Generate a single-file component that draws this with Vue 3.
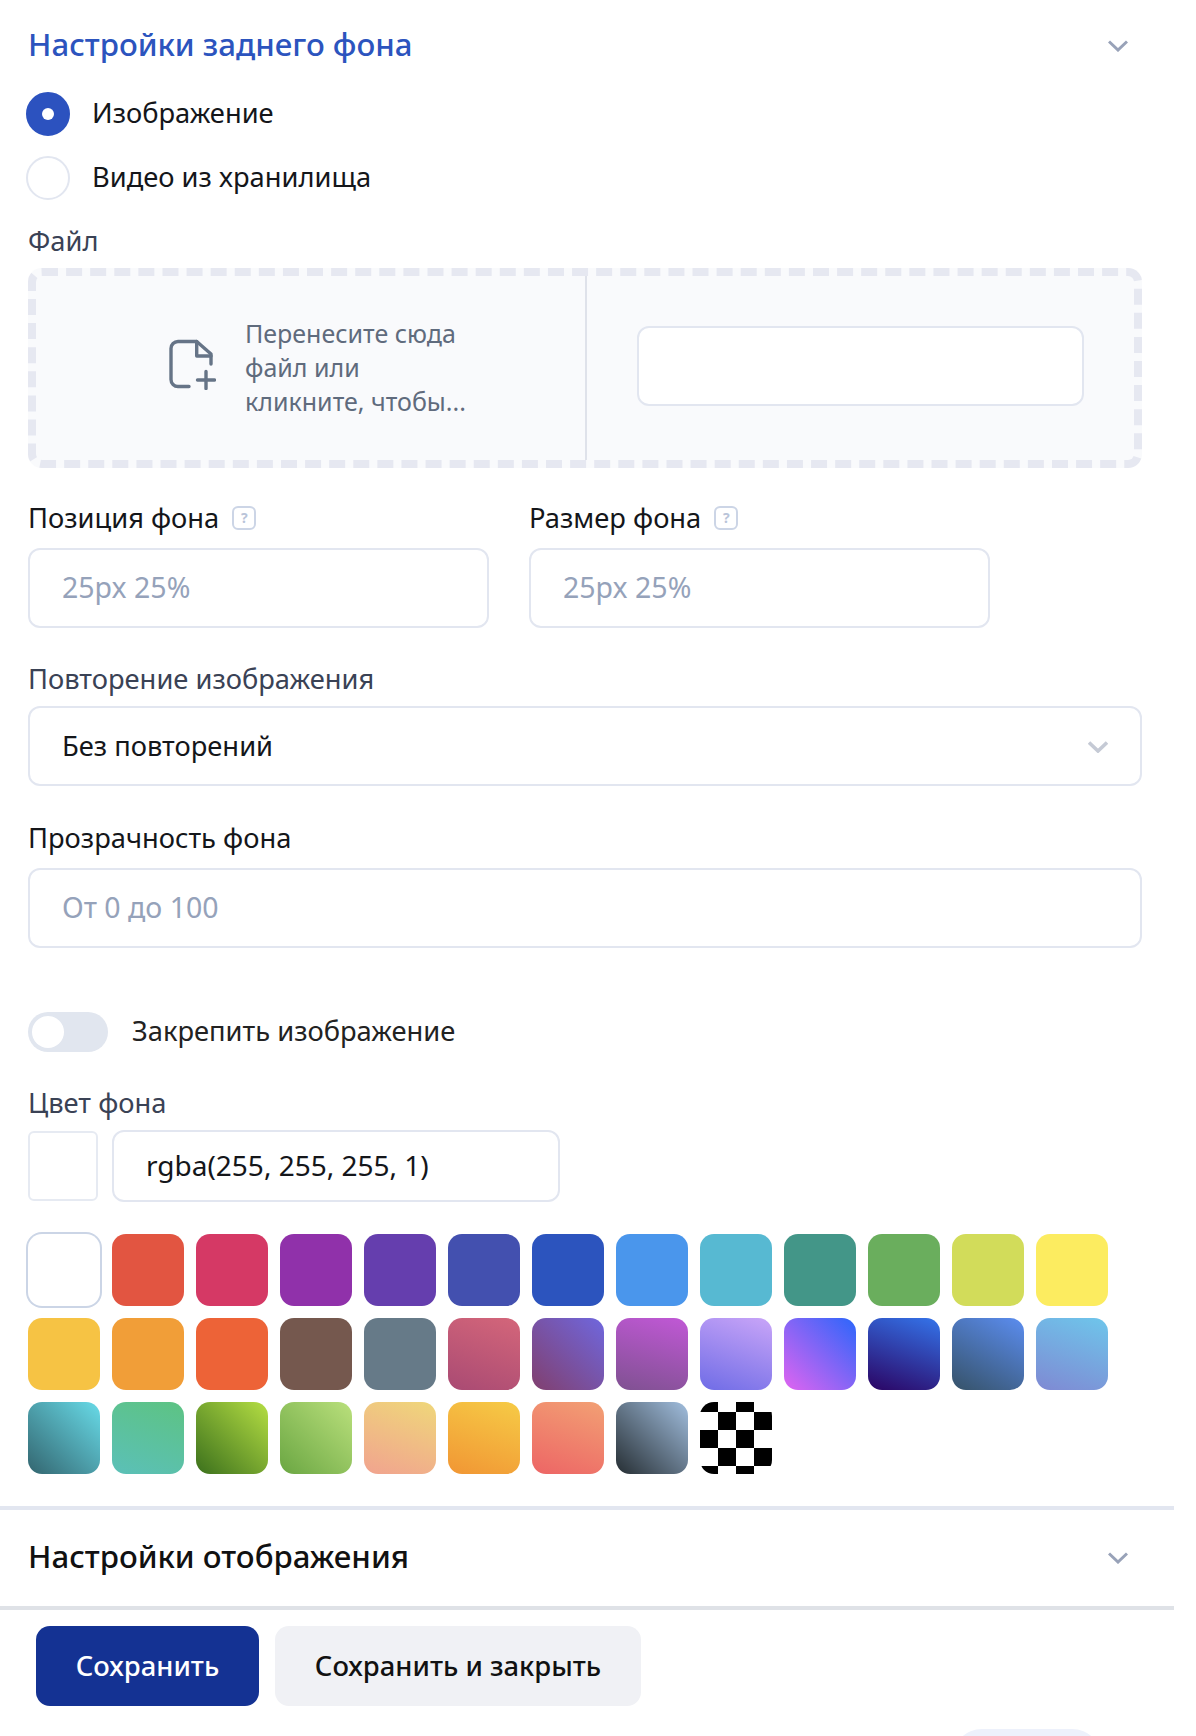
<template>
  <div class="page">
    <section class="panel">
      <header class="section-head">
        <h2 class="title title-active">Настройки заднего фона</h2>
        <svg class="chevron" width="20" height="12" viewBox="0 0 20 12"><polyline points="1,1.5 10,10 19,1.5" /></svg>
      </header>

      <div class="radios">
        <label class="radio-row">
          <span class="radio radio-on"><span class="radio-dot"></span></span>
          <span class="row-text">Изображение</span>
        </label>
        <label class="radio-row">
          <span class="radio"></span>
          <span class="row-text">Видео из хранилища</span>
        </label>
      </div>

      <div class="label label-muted file-label">Файл</div>
      <div class="dropzone">
        <div class="drop-left">
          <svg class="file-icon" width="48" height="52" viewBox="0 0 48 52">
            <path d="M21 48.5H10a7 7 0 0 1-7-7V10.5a7 7 0 0 1 7-7H28.7L43 16V26" />
            <path d="M28.7 3.5V18H43" />
            <path d="M38 33.5V50.5M29.5 42H46.5" />
          </svg>
          <div class="drop-text">Перенесите сюда<br>файл или<br>кликните, чтобы...</div>
        </div>
        <div class="drop-right">
          <div class="field"></div>
        </div>
      </div>

      <div class="pair">
        <div class="pair-col">
          <div class="label">Позиция фона<span class="help">?</span></div>
          <div class="field placeholder">25px 25%</div>
        </div>
        <div class="pair-col">
          <div class="label">Размер фона<span class="help">?</span></div>
          <div class="field placeholder">25px 25%</div>
        </div>
      </div>

      <div class="label label-muted repeat-label">Повторение изображения</div>
      <div class="field select">
        <span>Без повторений</span>
        <svg class="chevron chevron-light" width="20" height="12" viewBox="0 0 20 12"><polyline points="1,1.5 10,10 19,1.5" /></svg>
      </div>

      <div class="label opacity-label">Прозрачность фона</div>
      <div class="field placeholder">От 0 до 100</div>

      <div class="toggle-row">
        <span class="toggle"><span class="knob"></span></span>
        <span class="row-text">Закрепить изображение</span>
      </div>

      <div class="label label-muted color-label">Цвет фона</div>
      <div class="color-row">
        <div class="color-preview"></div>
        <div class="color-input">rgba(255, 255, 255, 1)</div>
      </div>

      <div class="swatches">
        <div
          v-for="(bg, i) in swatches"
          :key="i"
          class="swatch"
          :class="{ selected: i === 0 }"
          :style="{ background: bg }"
        ></div>
        <div class="swatch checker"></div>
      </div>
    </section>

    <div class="rule"></div>
    <section class="panel">
      <header class="section-head second">
        <h2 class="title">Настройки отображения</h2>
        <svg class="chevron" width="20" height="12" viewBox="0 0 20 12"><polyline points="1,1.5 10,10 19,1.5" /></svg>
      </header>
    </section>
    <div class="rule rule-grey"></div>

    <footer class="actions">
      <button class="btn btn-primary">Сохранить</button>
      <button class="btn btn-light">Сохранить и закрыть</button>
    </footer>
    <div class="floating"></div>
  </div>
</template>

<script setup>
// пары цветов для градиентных образцов
const grad = (from, to, angle = 45) => `linear-gradient(${angle}deg, ${from}, ${to})`

const swatches = [
  '#ffffff', '#e25541', '#d53965', '#9031aa', '#653eae', '#4350af', '#2c54be',
  '#4a96ec', '#57b9d2', '#439688', '#6aae5d', '#d2dc5a', '#fcec60',
  '#f6c344', '#f19e38', '#ed6337', '#75584e', '#667a88',
  grad('#a94a73', '#d4667a', 20),
  grad('#813f6e', '#6f67de'),
  grad('#7f5191', '#c158d6', 15),
  grad('#6f6ce6', '#c9a5f8', 20),
  grad('#e064f0', '#2b66fb'),
  grad('#2b0463', '#3474ea', 20),
  grad('#365268', '#5b8df0', 30),
  grad('#7f89d3', '#6ec6eb', 20),
  grad('#33656f', '#68dbe8'),
  grad('#5bc0b8', '#5dc383', 20),
  grad('#3b701c', '#b5de43'),
  grad('#6aa642', '#bae07c'),
  grad('#f1a38f', '#efd77a', 20),
  grad('#f19634', '#f6cb46', 20),
  grad('#ed6565', '#f2a074', 20),
  grad('#262e33', '#a1bede')
]
</script>

<style>
html, body {
  background: #fff;
  overflow: hidden;
}
</style>

<style scoped>
.page {
  width: 1196px;
  height: 1736px;
  overflow: hidden;
  font-family: "Noto Sans", "Open Sans", sans-serif;
  font-size: 27.3px;
  color: #14161a;
  background: #fff;
}

.panel {
  width: 1174px;
  box-sizing: border-box;
  padding: 0 32px 0 28px;
}

.section-head {
  height: 92px;
  display: flex;
  align-items: center;
  justify-content: space-between;
}

.section-head.second {
  height: 96px;
}

.title {
  margin: 0 0 4px;
  font-size: 31.2px;
  font-weight: 500;
  color: #111;
}

.title-active {
  color: #2c54be;
}

.chevron {
  margin-right: 14px;
  fill: none;
  stroke: #98a2b8;
  stroke-width: 3;
}

.chevron-light {
  margin: 4px 0 0;
  stroke: #c5cad5;
  stroke-width: 3.6;
}

.radios {
  display: flex;
  flex-direction: column;
  gap: 20px;
  margin-left: -2px;
}

.radio-row {
  display: flex;
  align-items: center;
  gap: 22px;
  height: 44px;
}

.row-text {
  margin-bottom: 3px;
}

.radio {
  width: 44px;
  height: 44px;
  box-sizing: border-box;
  border: 2px solid #e2e6f0;
  border-radius: 50%;
  display: flex;
  align-items: center;
  justify-content: center;
}

.radio-on {
  background: #2c52bf;
  border-color: #2c52bf;
}

.radio-dot {
  width: 12px;
  height: 12px;
  border-radius: 50%;
  background: #fff;
}

.label {
  display: flex;
  align-items: center;
  gap: 13px;
  height: 36px;
  box-sizing: border-box;
  padding-bottom: 2px;
}

.label-muted {
  color: #3a4255;
}

.file-label {
  margin: 23px 0 9px;
}

.repeat-label {
  margin: 33px 0 9px;
}

.opacity-label {
  margin: 34px 0 12px;
}

.color-label {
  margin: 33px 0 9px;
}

.dropzone {
  height: 200px;
  box-sizing: border-box;
  border: 8px dashed #e6e8f1;
  border-radius: 14px;
  background: #f9fafc;
  display: flex;
}

.drop-left {
  width: 551px;
  box-sizing: border-box;
  padding-left: 132px;
  border-right: 2px solid #dfe2ea;
  display: flex;
  align-items: center;
  gap: 29px;
  flex-shrink: 0;
}

.file-icon {
  fill: none;
  stroke: #667487;
  stroke-width: 3.4;
  stroke-linecap: round;
  stroke-linejoin: round;
  margin-top: -8px;
}

.drop-text {
  font-size: 25px;
  line-height: 34px;
  color: #5f6b7d;
  white-space: nowrap;
  margin-bottom: 3px;
}

.drop-right {
  flex: 1;
  padding: 0 50px 4px;
  display: flex;
  align-items: center;
}

.field {
  flex: 1;
  height: 80px;
  box-sizing: border-box;
  border: 2px solid #e2e6f0;
  border-radius: 12px;
  background: #fff;
  padding: 0 32px 2px;
  display: flex;
  align-items: center;
}

.placeholder {
  color: #95a2ba;
  font-size: 28.5px;
}

.select {
  justify-content: space-between;
}

.pair {
  display: flex;
  gap: 40px;
  margin-top: 32px;
}

.pair-col {
  width: 461px;
  display: flex;
  flex-direction: column;
  gap: 12px;
}

.pair-col .field {
  flex: none;
}

.help {
  width: 24px;
  height: 24px;
  margin-top: 2px;
  box-sizing: border-box;
  border: 2px solid #ccd5e6;
  border-radius: 6px;
  color: #b9c4d9;
  font-size: 14px;
  line-height: 1;
  font-weight: 700;
  display: flex;
  align-items: center;
  justify-content: center;
}

.toggle-row {
  display: flex;
  align-items: center;
  gap: 24px;
  margin-top: 64px;
  color: #222;
}

.toggle {
  width: 80px;
  height: 40px;
  border-radius: 20px;
  background: #e1e6ef;
  display: flex;
  align-items: center;
  padding-left: 4px;
  box-sizing: border-box;
}

.knob {
  width: 32px;
  height: 32px;
  border-radius: 50%;
  background: #fff;
}

.color-row {
  display: flex;
  align-items: center;
  gap: 14px;
}

.color-preview {
  width: 70px;
  height: 70px;
  box-sizing: border-box;
  border: 2px solid #e6eaf2;
  border-radius: 6px;
  background: #fff;
}

.color-input {
  width: 448px;
  height: 72px;
  box-sizing: border-box;
  border: 2px solid #e2e6f0;
  border-radius: 12px;
  padding: 0 0 3px 32px;
  display: flex;
  align-items: center;
  font-size: 28px;
}

.swatches {
  display: grid;
  grid-template-columns: repeat(13, 72px);
  grid-auto-rows: 72px;
  gap: 12px;
  margin: 32px 0;
}

.swatch {
  border-radius: 14px;
}

.swatch.selected {
  box-shadow: 0 0 0 2px #cbd5e6;
}

.checker {
  background: conic-gradient(#fff 0 25%, #000 0 50%, #fff 0 75%, #000 0) 0 -8px / 36px 36px;
}

.rule {
  width: 1174px;
  height: 4px;
  background: #e2e6f0;
}

.rule-grey {
  background: #dfe2e7;
}

.actions {
  display: flex;
  gap: 16px;
  margin: 16px 0 0 36px;
}

.btn {
  height: 80px;
  border: 0;
  padding: 0 0 2px;
  border-radius: 14px;
  font-family: inherit;
  font-size: 27.4px;
  font-weight: 500;
}

.btn-primary {
  width: 223px;
  background: #143293;
  color: #fff;
}

.btn-light {
  width: 366px;
  background: #f0f1f5;
  color: #111;
}

.floating {
  width: 150px;
  height: 60px;
  margin: 23px 0 0 952px;
  border-radius: 30px;
  background: #edf1fb;
}
</style>
